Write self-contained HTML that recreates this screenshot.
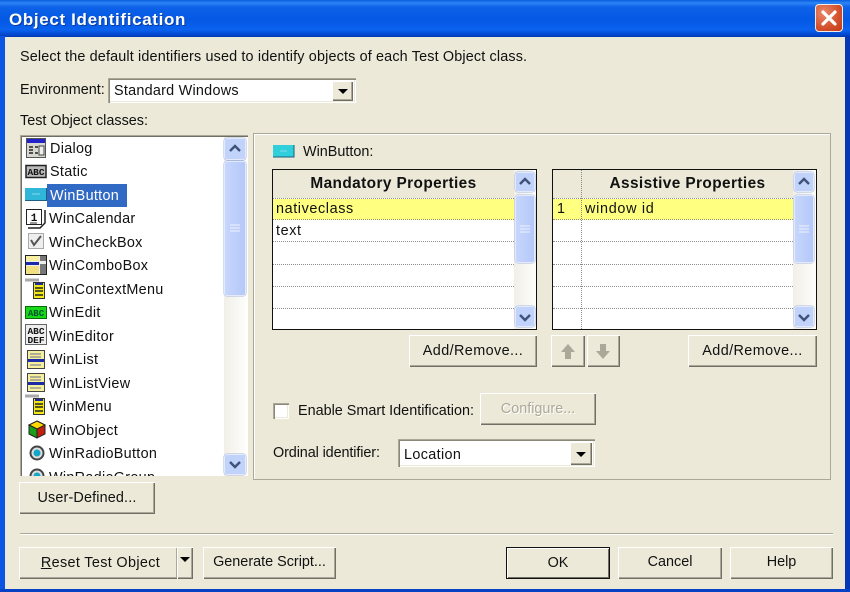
<!DOCTYPE html>
<html><head><meta charset="utf-8"><style>
html,body{margin:0;padding:0;width:850px;height:592px;overflow:hidden;background:#ece9d8}
*{box-sizing:border-box}
#w{position:relative;width:850px;height:592px;font-family:"Liberation Sans",sans-serif;font-size:14.4px;color:#111;overflow:hidden}
.a{position:absolute}
.t{position:absolute;white-space:nowrap;line-height:18px;height:18px;filter:blur(.25px)}
.l .t{letter-spacing:.3px}
.b{position:absolute;background:#ece9d8;box-shadow:inset 1px 1px 0 #fff,inset -1px -1px 0 #716f64,inset -2px -2px 0 #aca899;text-align:center;white-space:nowrap;filter:blur(.25px)}
.sunk{position:absolute;background:#fff;box-shadow:inset 1px 1px 0 #aca899,inset 2px 2px 0 #8b8878,inset -1px -1px 0 #fff,inset -2px -2px 0 #ece9d8}
.sb{position:absolute;background:linear-gradient(90deg,#f1efe8,#fdfdfa)}
.up,.dn,.th{position:absolute;left:0;right:0;background:#c1d2fb;border:1px solid #e4eafb;border-radius:3px;box-shadow:0 0 0 .5px #a9badf}
.th{background:linear-gradient(90deg,#c6d6fc,#b5c8f8)}
.up svg,.dn svg,.th svg,.i{position:absolute}
.line{position:absolute;height:0;border-top:1px dotted #8d8d8d}
.drop{position:absolute;background:#ece9d8;box-shadow:inset 1px 1px 0 #fff,inset -1px -1px 0 #716f64,inset -2px -2px 0 #aca899}
.drop i{position:absolute;left:50%;top:50%;margin:-2px 0 0 -5px;border:5px solid transparent;border-top:5px solid #000;border-bottom:0}
.hd{font-weight:bold;font-size:15.4px;letter-spacing:.4px;text-align:center}
.ar{letter-spacing:.4px}
</style></head><body><div id="w">

<!-- frame -->
<div class="a" style="left:0;top:0;width:850px;height:37px;background:linear-gradient(180deg,#0a5ce0 0,#2c86f5 3px,#0d62e8 7px,#0458e4 20px,#0a62ee 30px,#0345c9 35px,#0239b2 37px)"></div>
<div class="a" style="left:0;top:36px;width:5px;height:556px;background:#0b54e4"></div>
<div class="a" style="right:0;top:36px;width:5px;height:556px;background:#0638b6"></div>
<div class="a" style="left:0;top:589px;width:850px;height:3px;background:#0741c4"></div>
<div class="t" style="left:9px;top:10px;color:#fff;font-weight:bold;font-size:17px;letter-spacing:.65px;line-height:20px;height:20px;text-shadow:1px 1px 0 #0a3a9e">Object Identification</div>
<div class="a" style="left:815px;top:4px;width:28px;height:28px;border:1px solid #f2ece6;border-radius:4px;background:radial-gradient(circle at 30% 30%,#e98a6a,#d3502c 60%,#c23a14)">
<svg width="26" height="26" style="position:absolute;left:0;top:0"><path d="M7 7L19 19M19 7L7 19" stroke="#fff" stroke-width="3.2" stroke-linecap="round"/></svg></div>

<div class="t" style="left:20px;top:48px;letter-spacing:.15px">Select the default identifiers used to identify objects of each Test Object class.</div>
<div class="t" style="left:20px;top:81px">Environment:</div>
<div class="sunk" style="left:108px;top:78px;width:248px;height:25px"></div>
<div class="t" style="left:114px;top:82px;letter-spacing:.25px">Standard Windows</div>
<div class="drop" style="left:332px;top:81px;width:21px;height:20px"><i></i></div>
<div class="t" style="left:20px;top:112px">Test Object classes:</div>

<!-- class list -->
<div class="a l" style="left:20px;top:135px;width:228px;height:341px;background:#fff;box-shadow:inset 1px 1px 0 #aca899,inset 2px 2px 0 #716f64,inset -1px -1px 0 #fff;overflow:hidden">
 <div class="a" style="left:27px;top:49px;width:80px;height:23px;background:#316ac5"></div>
 <div class="t" style="left:30px;top:5px">Dialog</div>
 <div class="t" style="left:30px;top:28px">Static</div>
 <div class="t" style="left:30px;top:52px;color:#fff">WinButton</div>
 <div class="t" style="left:29px;top:75px">WinCalendar</div>
 <div class="t" style="left:29px;top:99px">WinCheckBox</div>
 <div class="t" style="left:29px;top:122px">WinComboBox</div>
 <div class="t" style="left:29px;top:146px">WinContextMenu</div>
 <div class="t" style="left:29px;top:169px">WinEdit</div>
 <div class="t" style="left:29px;top:193px">WinEditor</div>
 <div class="t" style="left:29px;top:216px">WinList</div>
 <div class="t" style="left:29px;top:240px">WinListView</div>
 <div class="t" style="left:29px;top:263px">WinMenu</div>
 <div class="t" style="left:29px;top:287px">WinObject</div>
 <div class="t" style="left:29px;top:310px">WinRadioButton</div>
 <div class="t" style="left:29px;top:334px">WinRadioGroup</div>

 <!-- icons -->
 <svg class="i" style="left:5px;top:3px" width="22" height="342" viewBox="0 0 22 342" font-family="Liberation Mono,monospace" font-weight="bold">
  <!-- dialog -->
  <rect x="1.5" y="0.5" width="19" height="19" fill="#d8d8d0" stroke="#555"/><rect x="2" y="1" width="18" height="4" fill="#2222c8"/>
  <path d="M4 9h4M4 12h4M4 15h4M10 9h3M10 15h3" stroke="#222" stroke-width="1.5"/><rect x="14" y="8" width="5" height="9" fill="#eee" stroke="#444"/>
  <!-- static -->
  <rect x="1" y="27.500" width="20" height="12" fill="#bbb" stroke="#222" stroke-width="1.500"/><text x="11" y="37" font-size="9.5" text-anchor="middle" fill="#111">ABC</text>
  <!-- button -->
  <rect x="0" y="50" width="22" height="13" fill="#2fb6d8"/><path d="M0 62.500h21.500V50" stroke="#1c5f80" fill="none"/><path d="M7 56h8" stroke="#8adcf0"/>
  <!-- calendar -->
  <rect x="1.500" y="71.500" width="15" height="15" fill="#fff" stroke="#222"/><path d="M20 72v13l-5 5H3" stroke="#222" fill="none" stroke-width="1.500"/><text x="9" y="83" font-size="11" text-anchor="middle" fill="#111">1</text><path d="M5 85h7" stroke="#999" stroke-width="2"/>
  <!-- checkbox -->
  <rect x="3.500" y="95.500" width="15" height="15" fill="#eee" stroke="#aaa"/><path d="M6 102l3 5 7-9" stroke="#555" stroke-width="2" fill="none"/>
  <!-- combo -->
  <rect x="0.500" y="117.500" width="21" height="19" fill="#eee" stroke="#222"/><rect x="1" y="118" width="13" height="5" fill="#f6eea0"/><rect x="1" y="124" width="13" height="3" fill="#1a2aa8"/><rect x="1" y="128" width="13" height="8" fill="#f0e080"/><rect x="15" y="118" width="6" height="5" fill="#777"/><rect x="15" y="126" width="6" height="10" fill="#777"/>
  <!-- context menu -->
  <path d="M0 142h14" stroke="#aaa" stroke-width="3"/><rect x="8.500" y="144.500" width="11" height="16" fill="#f1e81c" stroke="#333"/><path d="M10 150h8M10 153h8M10 157h8" stroke="#222" stroke-width="1.500"/><path d="M10 146h8" stroke="#1a2aa8" stroke-width="2"/>
  <!-- edit -->
  <rect x="0.500" y="168.500" width="21" height="12" fill="#18d818" stroke="#0a6a0a"/><text x="11" y="178" font-size="9" text-anchor="middle" fill="#053">ABC</text>
  <!-- editor -->
  <rect x="0.500" y="186.500" width="21" height="20" fill="#eee" stroke="#666"/><text x="11" y="196" font-size="9.500" text-anchor="middle" fill="#111">ABC</text><text x="11" y="205" font-size="9.500" text-anchor="middle" fill="#111">DEF</text>
  <!-- list -->
  <rect x="2.500" y="212.500" width="17" height="18" fill="#f5f0a0" stroke="#444"/><path d="M5 216h11M5 219h11M5 227h11" stroke="#888" stroke-width="1.300"/><rect x="3" y="221" width="16" height="3" fill="#1a2aa8"/>
  <rect x="2.500" y="235.500" width="17" height="18" fill="#f5f0a0" stroke="#444"/><path d="M5 239h11M5 242h11M5 250h11" stroke="#888" stroke-width="1.300"/><rect x="3" y="244" width="16" height="3" fill="#1a2aa8"/>
  <!-- menu -->
  <path d="M0 258h14" stroke="#aaa" stroke-width="3"/><rect x="8.500" y="260.500" width="11" height="16" fill="#f1e81c" stroke="#333"/><path d="M10 266h8M10 269h8M10 273h8" stroke="#222" stroke-width="1.500"/><path d="M10 262h8" stroke="#1a2aa8" stroke-width="2"/>
  <!-- object -->
  <path d="M12 283l8 4v9l-8 4-8-4v-9z" fill="#c02010" stroke="#222"/><path d="M12 283l8 4-8 4-8-4z" fill="#ffd800" stroke="#222"/><path d="M4 287l8 4v9l-8-4z" fill="#18a018" stroke="#222"/>
  <!-- radio -->
  <circle cx="12" cy="315" r="6.500" fill="#ddd" stroke="#444" stroke-width="2"/><circle cx="12" cy="315" r="3.500" fill="#11a8c8"/>
  <circle cx="12" cy="338" r="6.500" fill="#ddd" stroke="#444" stroke-width="2"/><circle cx="12" cy="338" r="3.500" fill="#11a8c8"/>
 </svg>

 <div class="sb" style="left:204px;top:2px;width:22px;height:339px">
  <div class="up" style="top:1px;height:22px"><svg width="20" height="20"><path d="M5 12l5-5 5 5" stroke="#3f5378" stroke-width="2.400" fill="none"/></svg></div>
  <div class="th" style="top:24px;height:135px"><svg width="20" height="135"><path d="M5 63h10M5 66h10M5 69h10" stroke="#eef2fd"/></svg></div>
  <div class="dn" style="top:317px;height:21px"><svg width="20" height="20"><path d="M5 7l5 5 5-5" stroke="#3f5378" stroke-width="2.400" fill="none"/></svg></div>
 </div>
</div>

<!-- right panel -->
<div class="a" style="left:253px;top:133px;width:578px;height:347px;border:1px solid #aca899;box-shadow:inset 1px 1px 0 #fff"></div>
<svg class="i" style="left:273px;top:145px" width="22" height="13"><rect width="21" height="12" fill="#2fd0dc"/><path d="M0 12h21V0" stroke="#1c5f80" fill="none"/><path d="M7 6h7" stroke="#8adcf0"/></svg>
<div class="t" style="left:303px;top:143px">WinButton:</div>

<!-- mandatory grid -->
<div class="a" style="left:272px;top:169px;width:265px;height:161px;border:1px solid #111;background:#fff;overflow:hidden">
 <div class="a" style="left:0;top:0;width:241px;height:28px;background:#ece9d8"></div>
 <div class="a" style="left:0;top:29px;width:241px;height:21px;background:#ffff80"></div>
 <div class="line" style="left:0;top:28px;width:241px"></div><div class="line" style="left:0;top:49px;width:241px"></div><div class="line" style="left:0;top:71px;width:241px"></div><div class="line" style="left:0;top:94px;width:241px"></div><div class="line" style="left:0;top:116px;width:241px"></div><div class="line" style="left:0;top:138px;width:241px"></div>
 <div class="t hd" style="left:0;top:5px;width:241px">Mandatory Properties</div>
 <div class="t" style="left:3px;top:30px;letter-spacing:.6px">nativeclass</div>
 <div class="t" style="left:3px;top:52px;letter-spacing:.6px">text</div>
 <div class="sb" style="left:241px;top:0;width:22px;height:159px">
  <div class="up" style="top:2px;left:1px;right:1px;height:20px"><svg width="18" height="18"><path d="M4 11l5-5 5 5" stroke="#3f5378" stroke-width="2.400" fill="none"/></svg></div>
  <div class="th" style="top:25px;left:1px;right:1px;height:68px"><svg width="18" height="68"><path d="M4 30h10M4 33h10M4 36h10" stroke="#eef2fd"/></svg></div>
  <div class="dn" style="top:136px;left:1px;right:1px;height:21px"><svg width="18" height="18"><path d="M4 8l5 5 5-5" stroke="#3f5378" stroke-width="2.400" fill="none"/></svg></div>
 </div>
</div>

<!-- assistive grid -->
<div class="a" style="left:552px;top:169px;width:265px;height:161px;border:1px solid #111;background:#fff;overflow:hidden">
 <div class="a" style="left:0;top:0;width:240px;height:28px;background:#ece9d8"></div>
 <div class="a" style="left:0;top:29px;width:240px;height:21px;background:#ffff80"></div>
 <div class="line" style="left:0;top:28px;width:240px"></div><div class="line" style="left:0;top:49px;width:240px"></div><div class="line" style="left:0;top:71px;width:240px"></div><div class="line" style="left:0;top:94px;width:240px"></div><div class="line" style="left:0;top:116px;width:240px"></div><div class="line" style="left:0;top:138px;width:240px"></div>
 <div class="a" style="left:28px;top:0;height:159px;width:0;border-left:1px dotted #8d8d8d"></div>
 <div class="t hd" style="left:29px;top:5px;width:211px">Assistive Properties</div>
 <div class="t" style="left:4px;top:30px">1</div>
 <div class="t" style="left:32px;top:30px;letter-spacing:.7px">window id</div>
 <div class="sb" style="left:240px;top:0;width:23px;height:159px">
  <div class="up" style="top:2px;left:1px;right:2px;height:20px"><svg width="18" height="18"><path d="M4 11l5-5 5 5" stroke="#3f5378" stroke-width="2.400" fill="none"/></svg></div>
  <div class="th" style="top:25px;left:1px;right:2px;height:68px"><svg width="18" height="68"><path d="M4 30h10M4 33h10M4 36h10" stroke="#eef2fd"/></svg></div>
  <div class="dn" style="top:136px;left:1px;right:2px;height:21px"><svg width="18" height="18"><path d="M4 8l5 5 5-5" stroke="#3f5378" stroke-width="2.400" fill="none"/></svg></div>
 </div>
</div>

<div class="b ar" style="left:409px;top:335px;width:128px;height:32px;line-height:33px">Add/Remove...</div>
<div class="b ar" style="left:688px;top:335px;width:129px;height:32px;line-height:33px">Add/Remove...</div>
<div class="b" style="left:551px;top:335px;width:34px;height:32px"><svg width="34" height="32" style="position:absolute;left:0;top:0"><path d="M17 9l7 8h-4v7h-6v-7h-4z" fill="#aca899"/></svg></div>
<div class="b" style="left:587px;top:335px;width:33px;height:32px"><svg width="33" height="32" style="position:absolute;left:0;top:0"><path d="M16 24l-7-8h4V9h6v7h4z" fill="#aca899"/></svg></div>

<div class="sunk" style="left:273px;top:403px;width:16px;height:16px"></div>
<div class="t" style="left:298px;top:402px">Enable Smart Identification:</div>
<div class="b" style="left:480px;top:393px;width:116px;height:32px;line-height:33px;color:#aca899;text-shadow:1px 1px 0 #fff">Configure...</div>
<div class="t" style="left:273px;top:444px;letter-spacing:-.1px">Ordinal identifier:</div>
<div class="sunk" style="left:398px;top:439px;width:197px;height:28px"></div>
<div class="t" style="left:404px;top:446px;letter-spacing:.35px">Location</div>
<div class="drop" style="left:570px;top:442px;width:22px;height:23px"><i></i></div>

<div class="b" style="left:19px;top:482px;width:136px;height:32px;line-height:33px;letter-spacing:.15px">User-Defined...</div>
<div class="a" style="left:20px;top:533px;width:813px;height:2px;background:#aca899;border-bottom:1px solid #fff"></div>

<div class="b" style="left:19px;top:547px;width:159px;height:32px;line-height:33px;letter-spacing:.35px;text-indent:4px"><u>R</u>eset Test Object</div>
<div class="drop" style="left:177px;top:547px;width:16px;height:32px"><i style="margin-top:-6px"></i></div>
<div class="b" style="left:203px;top:547px;width:133px;height:32px;line-height:30px">Generate Script...</div>
<div class="b" style="left:506px;top:547px;width:104px;height:32px;line-height:30px;border:1px solid #111;box-shadow:inset 1px 1px 0 #fff,inset -1px -1px 0 #716f64">OK</div>
<div class="b" style="left:618px;top:547px;width:104px;height:32px;line-height:31px">Cancel</div>
<div class="b" style="left:730px;top:547px;width:103px;height:32px;line-height:31px">Help</div>
</div></body></html>
